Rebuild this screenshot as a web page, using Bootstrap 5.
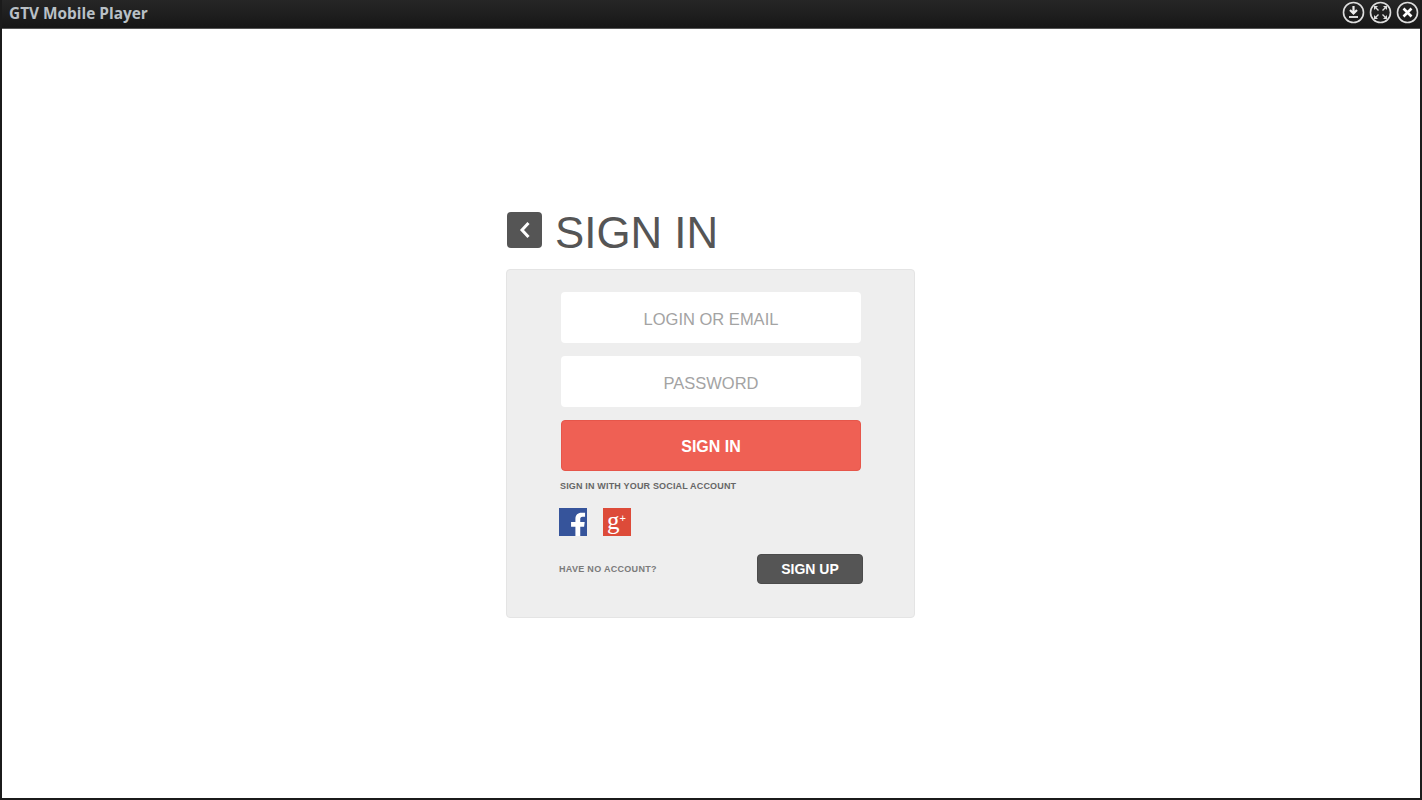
<!DOCTYPE html>
<html lang="en">
<head>
  <meta charset="UTF-8">
  <title>GTV Mobile Player</title>
  <link href="https://cdn.jsdelivr.net/npm/bootstrap@5.3.0/dist/css/bootstrap.min.css" rel="stylesheet">
  <style>
    html, body { height: 100%; }
    body { background: #1b1b1b; overflow: hidden; font-family: "Liberation Sans", Arial, sans-serif; }
    .app-window { height: 800px; padding: 0 2px 2px 2px; }
    .title-bar { height: 28px; padding-left: 7px; padding-right: 1px; background: linear-gradient(#262626, #171717); }
    .title-text { font-family: "Open Sans", sans-serif; font-weight: 700; font-size: 15.4px; color: #b9c0c6; line-height: 28px; }
    .win-btn { width: 23px; height: 23px; display: block; }
    .win-btns { gap: 4px; margin-top: 1px; }
    .page-area { background: #fff; height: 770px; border-top: 1px solid #555; }
    .signin-wrap { width: 409px; margin-left: 504px; padding-top: 183px; }
    .back-btn { width: 35px; height: 36px; margin-left: 1px; background: #555; border-radius: 4px; border: 0; padding: 0; }
    .signin-title { font-size: 43.8px; line-height: 44px; color: #555; margin: 6px 0 0 13px; font-weight: 400; }
    .signin-head { margin-bottom: 21px; height: 36px; }
    .signin-box { height: 349px; background: #eee; border: 1px solid #e4e4e4; border-radius: 4px; padding: 22px 53px 0 54px; }
    .field-input { height: 51px; border: 0; border-radius: 4px; background: #fff; text-align: center; font-size: 16.5px; color: #777; margin-bottom: 13px; padding: 3px 0 0 0; box-shadow: none; }
    .field-input::placeholder { color: #a3a3a3; opacity: 1; }
    .signin-btn { height: 51px; background: #ef6054; border: 1px solid #e6564a; border-radius: 4px; color: #fff; font-weight: 700; font-size: 16px; padding: 8px 0 6px; }
    .signin-btn:hover { background: #ef6054; color: #fff; }
    .social-label { font-size: 9px; font-weight: 700; letter-spacing: 0.17px; color: #666; margin: 10px 0 16px -1px; line-height: 11px; }
    .social-icons { gap: 16px; margin-left: -2px; }
    .social-icon { width: 28px; height: 28px; display: block; }
    .gplus-tile { background: #dd4b39; color: #fff; padding-left: 4px; font-family: "Liberation Serif", serif; }
    .gplus-g { font-size: 25px; line-height: 25px; }
    .gplus-plus { font-size: 11px; line-height: 20px; font-family: "Liberation Sans", sans-serif; }
    .account-row { margin: 18px -2px 0 -2px; }
    .account-label { font-size: 9px; font-weight: 700; letter-spacing: 0.3px; color: #7a7a7a; margin-top: 1px; }
    .signup-btn { width: 106px; height: 30px; background: #555; border: 1px solid #4b4b4b; border-radius: 4px; color: #fff; font-weight: 700; font-size: 14px; padding: 1px 0 0 0; }
    .signup-btn:hover { background: #555; color: #fff; }
  </style>
</head>
<body>
  <div class="app-window">
    <div class="title-bar d-flex justify-content-between align-items-start">
      <div class="title-text">GTV Mobile Player</div>
      <div class="win-btns d-flex">
        <svg class="win-btn" viewBox="0 0 23 23"><circle cx="11.5" cy="11.5" r="10" fill="none" stroke="#ddd" stroke-width="1.6"/><path d="M11.5 5v6.5M8 9l3.500 3.500L15 9" fill="none" stroke="#eee" stroke-width="2.2"/><path d="M7 16h9" stroke="#eee" stroke-width="1.8"/></svg>
        <svg class="win-btn" viewBox="0 0 23 23"><circle cx="11.5" cy="11.5" r="10" fill="none" stroke="#ddd" stroke-width="1.6"/><path d="M6 6l3.500 3.500M17 6l-3.500 3.500M6 17l3.500-3.500M17 17l-3.500-3.500" stroke="#ddd" stroke-width="1.4"/><path d="M5 5h4l-4 4zM18 5v4l-4-4zM5 18v-4l4 4zM18 18h-4l4-4z" fill="#ddd"/></svg>
        <svg class="win-btn" viewBox="0 0 23 23"><circle cx="11.5" cy="11.5" r="10" fill="none" stroke="#ddd" stroke-width="1.6"/><path d="M7.500 7.500l8 8M15.500 7.500l-8 8" stroke="#fff" stroke-width="2.6"/></svg>
      </div>
    </div>
    <div class="page-area">
      <div class="signin-wrap">
        <div class="signin-head d-flex align-items-center">
          <button class="back-btn d-flex align-items-center justify-content-center" type="button">
            <svg width="14" height="20" viewBox="0 0 14 20"><path d="M10.500 3L4 10l6.500 7" fill="none" stroke="#fff" stroke-width="3"/></svg>
          </button>
          <h1 class="signin-title">SIGN IN</h1>
        </div>
        <form class="signin-box">
          <input class="form-control field-input" placeholder="LOGIN OR EMAIL">
          <input class="form-control field-input" type="password" placeholder="PASSWORD">
          <button class="btn signin-btn w-100" type="button">SIGN IN</button>
          <div class="social-label">SIGN IN WITH YOUR SOCIAL ACCOUNT</div>
          <div class="social-icons d-flex">
            <svg class="social-icon" viewBox="0 0 29 29"><rect width="29" height="29" fill="#36549b"/><path d="M22 29V19.500h4l.6-5H22v-3c0-1.500.5-2.500 2.500-2.500H27V5c-.5 0-2-.2-3.700-.2-3.800 0-6.300 2.300-6.300 6.500v3.200h-4.500v5H17V29z" fill="#fff"/></svg>
            <div class="social-icon gplus-tile d-flex align-items-start"><span class="gplus-g">g</span><span class="gplus-plus">+</span></div>
          </div>
          <div class="account-row d-flex justify-content-between align-items-center">
            <span class="account-label">HAVE NO ACCOUNT?</span>
            <button class="btn signup-btn" type="button">SIGN UP</button>
          </div>
        </form>
      </div>
    </div>
  </div>
  <script src="https://cdn.jsdelivr.net/npm/bootstrap@5.3.0/dist/js/bootstrap.bundle.min.js"></script>
</body>
</html>
